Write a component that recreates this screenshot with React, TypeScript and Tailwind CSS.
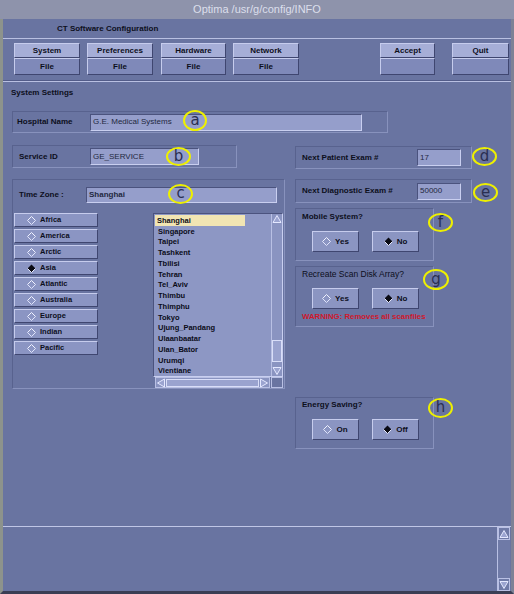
import type { ReactNode } from 'react';

const RAISED = 'border border-t-[#c6cced] border-l-[#c6cced] border-b-[#3f4670] border-r-[#3f4670]';
const SUNKEN = 'border border-t-[#4b537e] border-l-[#4b537e] border-b-[#c9cff0] border-r-[#c9cff0]';
const ETCHED = 'border border-t-[#58628e] border-l-[#58628e] border-b-[#8892bd] border-r-[#8892bd]';

const ZONES = [
  'Shanghai', 'Singapore', 'Taipei', 'Tashkent', 'Tbilisi', 'Tehran', 'Tel_Aviv', 'Thimbu',
  'Thimphu', 'Tokyo', 'Ujung_Pandang', 'Ulaanbaatar', 'Ulan_Bator', 'Urumqi', 'Vientiane',
];

const REGIONS = ['Africa', 'America', 'Arctic', 'Asia', 'Atlantic', 'Australia', 'Europe', 'Indian', 'Pacific'];

function Diamond({ on }: { on?: boolean }) {
  return (
    <svg width="9" height="9" viewBox="0 0 9 9" className="shrink-0">
      {on ? (
        <>
          <path d="M4.5 0.5 L8.5 4.5 L4.5 8.5 L0.5 4.5 Z" fill="#0a0b14" />
          <path d="M8.5 4.5 L4.5 8.5 L0.5 4.5" fill="none" stroke="#e8ebff" />
        </>
      ) : (
        <>
          <path d="M0.5 4.5 L4.5 0.5 L8.5 4.5" fill="none" stroke="#f0f2ff" />
          <path d="M8.5 4.5 L4.5 8.5 L0.5 4.5" fill="none" stroke="#dfe3fb" />
        </>
      )}
    </svg>
  );
}

function Marker({ letter, className }: { letter: string; className: string }) {
  return (
    <span
      className={`absolute flex items-center justify-center rounded-[50%] border-2 border-[#eef000] pb-[1px] font-['DejaVu_Sans',sans-serif] text-[15px] font-normal leading-none text-[#2a2f52] ${className}`}
    >
      {letter}
    </span>
  );
}

function ToolButton({ label, sub, className }: { label: string; sub?: string; className: string }) {
  return (
    <div className={`flex flex-col text-[8px] font-bold leading-none text-[#0d0f1c] ${className}`}>
      <div className={`flex h-[15px] items-center justify-center bg-[#a6aed7] ${RAISED}`}>{label}</div>
      <div className={`flex h-[17px] items-center justify-center bg-[#7f89b9] ${RAISED}`}>{sub}</div>
    </div>
  );
}

function Radio({ label, on }: { label: string; on?: boolean }) {
  return (
    <div
      className={`flex h-[21px] w-[47px] items-center justify-center gap-[4px] bg-[#8b95c2] text-[8px] font-bold text-[#0d0f1c] ${RAISED}`}
    >
      <Diamond on={on} />
      {label}
    </div>
  );
}

function Field({ children, className }: { children?: ReactNode; className: string }) {
  return (
    <div className={`flex items-center bg-[#959ecb] pl-[2px] text-[8px] text-[#23283e] ${SUNKEN} ${className}`}>
      {children}
    </div>
  );
}

function Arrow({ dir }: { dir: 'up' | 'down' | 'left' | 'right' }) {
  const d = {
    up: 'M5 1.5 L9 8.5 L1 8.5 Z',
    down: 'M1 1.5 L9 1.5 L5 8.5 Z',
    left: 'M1.5 5 L8.5 1 L8.5 9 Z',
    right: 'M8.5 5 L1.5 1 L1.5 9 Z',
  }[dir];
  return (
    <svg width="10" height="10" viewBox="0 0 10 10" className="shrink-0">
      <path d={d} fill="#9ba4d0" stroke="#e4e8ff" strokeWidth="1" />
    </svg>
  );
}

function ZoneList() {
  return (
    <div className="flex w-[130px] flex-col">
      <div className={`flex h-[164px] bg-[#8d97c4] ${SUNKEN}`}>
        <div className="flex flex-1 flex-col pl-[1px] pt-[1px] text-[7.5px] font-bold text-[#0b0c18]">
          {ZONES.map((z, i) => (
            <div
              key={z}
              className={i === 0 ? 'flex h-[10.75px] w-[90px] items-center bg-[#f1e5b3] pl-[2px]' : 'flex h-[10.75px] items-center pl-[3px]'}
            >
              {z}
            </div>
          ))}
        </div>
        <div className="flex w-[11px] flex-col border-l border-l-[#b9c0e4] bg-[#8a94c1]">
          <Arrow dir="up" />
          <div className="flex flex-1 flex-col justify-end pb-[4px]">
            <div className="h-[22px] border border-[#d9def8] bg-[#9aa3cf]" />
          </div>
          <Arrow dir="down" />
        </div>
      </div>
      <div className="flex h-[11px]">
        <div className="ml-[2px] flex w-[115px] items-center border border-[#b9c0e4] bg-[#8a94c1]">
          <Arrow dir="left" />
          <div className="h-[8px] flex-1 border border-[#d9def8] bg-[#9aa3cf]" />
          <Arrow dir="right" />
        </div>
        <div className="ml-[1px] flex-1 border border-[#b9c0e4]" />
      </div>
    </div>
  );
}

export default function App() {
  return (
    <div className="flex h-[594px] w-[514px] flex-col overflow-hidden bg-[#6974a1] font-['Liberation_Sans',Arial,sans-serif] text-[#0d0f1c]">
      <div className="flex h-[19px] items-center justify-center bg-[#8e93ab] text-[11px] text-[#dcdfec]">
        Optima /usr/g/config/INFO
      </div>

      <div className="flex flex-1 flex-col border-b-[3px] border-l-[3px] border-r-[3px] border-b-[#3a3e54] border-l-[#8d938c] border-r-[#7d8296]">
        <div className="flex h-[19px] items-center pl-[54px] text-[8px] font-bold">CT Software Configuration</div>
        <div className="h-px bg-[#b9c0e2]" />

        <div className="flex h-[41px] items-start pl-[11px] pt-[4px]">
          <ToolButton label="System" sub="File" className="w-[66px]" />
          <ToolButton label="Preferences" sub="File" className="ml-[7px] w-[66px]" />
          <ToolButton label="Hardware" sub="File" className="ml-[8px] w-[65px]" />
          <ToolButton label="Network" sub="File" className="ml-[7px] w-[66px]" />
          <ToolButton label="Accept" className="ml-[81px] w-[55px]" />
          <ToolButton label="Quit" className="ml-[17px] w-[57px]" />
        </div>
        <div className="h-px bg-[#535c89]" />
        <div className="h-px bg-[#b9c0e2]" />

        <main className="flex h-[444px] flex-col pl-[9px] pt-[6px]">
          <div className="-ml-[1px] h-[10px] text-[8px] font-bold leading-[10px]">System Settings</div>

          <div className={`relative mt-[13px] flex h-[22px] w-[376px] items-center ${ETCHED}`}>
            <span className="w-[77px] pl-[4px] text-[8px] font-bold">Hospital Name</span>
            <Field className="h-[17px] w-[272px]">G.E. Medical Systems</Field>
            <Marker letter="a" className="-top-[2px] left-[170px] h-[21px] w-[24px]" />
          </div>

          <div className="mt-[12px] flex gap-[10px]">
            <div className="flex w-[273px] flex-col gap-[11px]">
              <div className={`relative flex h-[23px] w-[225px] items-center ${ETCHED}`}>
                <span className="w-[77px] pl-[6px] text-[8px] font-bold">Service ID</span>
                <Field className="h-[17px] w-[109px]">GE_SERVICE</Field>
                <Marker letter="b" className="left-[153px] top-[1px] h-[19px] w-[25px]" />
              </div>

              <div className={`relative flex h-[210px] flex-col ${ETCHED}`}>
                <div className="mt-[7px] flex h-[16px] items-center">
                  <span className="w-[73px] pl-[6px] text-[8px] font-bold">Time Zone :</span>
                  <Field className="h-[16px] w-[191px] font-bold">Shanghai</Field>
                </div>
                <div className="mt-[10px] flex pl-[1px]">
                  <div className="flex w-[84px] flex-col gap-[2px]">
                    {REGIONS.map((r) => (
                      <div
                        key={r}
                        className={`flex h-[14px] items-center gap-[4px] bg-[#8b95c3] pl-[12px] text-[7.5px] font-bold ${RAISED}`}
                      >
                        <Diamond on={r === 'Asia'} />
                        {r}
                      </div>
                    ))}
                  </div>
                  <div className="ml-[55px]">
                    <ZoneList />
                  </div>
                </div>
                <Marker letter="c" className="left-[155px] top-[4px] h-[20px] w-[25px]" />
              </div>
            </div>

            <div className="mt-[1px] flex w-[177px] flex-col">
              <div className={`relative flex h-[23px] items-center ${ETCHED}`}>
                <span className="w-[121px] pl-[6px] text-[8px] font-bold">Next Patient Exam #</span>
                <Field className="h-[17px] w-[44px]">17</Field>
                <Marker letter="d" className="left-[176px] top-0 h-[19px] w-[25px]" />
              </div>

              <div className={`relative mt-[10px] flex h-[24px] items-center ${ETCHED}`}>
                <span className="w-[121px] pl-[6px] text-[8px] font-bold">Next Diagnostic Exam #</span>
                <Field className="h-[17px] w-[44px]">50000</Field>
                <Marker letter="e" className="left-[177px] top-[3px] h-[19px] w-[25px]" />
              </div>

              <div className={`relative mt-[5px] flex h-[53px] w-[139px] flex-col ${ETCHED}`}>
                <div className="mt-[3px] h-[10px] pl-[6px] text-[8px] font-bold leading-[10px]">Mobile System?</div>
                <div className="mt-[9px] flex gap-[13px] pl-[16px]">
                  <Radio label="Yes" />
                  <Radio label="No" on />
                </div>
                <Marker letter="f" className="left-[132px] top-[4px] h-[19px] w-[25px]" />
              </div>

              <div className={`relative mt-[5px] flex h-[61px] w-[139px] flex-col ${ETCHED}`}>
                <div className="mt-[2px] h-[10px] pl-[6px] text-[8.5px] leading-[10px]">Recreate Scan Disk Array?</div>
                <div className="mt-[9px] flex gap-[13px] pl-[16px]">
                  <Radio label="Yes" />
                  <Radio label="No" on />
                </div>
                <div className="mt-[3px] h-[10px] whitespace-nowrap pl-[6px] text-[7.8px] font-bold leading-[10px] text-[#d0182c]">
                  WARNING: Removes all scanfiles
                </div>
                <Marker letter="g" className="left-[127px] top-[2px] h-[21px] w-[26px]" />
              </div>

              <div className={`relative mt-[70px] flex h-[52px] w-[139px] flex-col ${ETCHED}`}>
                <div className="mt-[2px] h-[10px] pl-[6px] text-[8px] font-bold leading-[10px]">Energy Saving?</div>
                <div className="mt-[9px] flex gap-[13px] pl-[16px]">
                  <Radio label="On" />
                  <Radio label="Off" on />
                </div>
                <Marker letter="h" className="left-[132px] top-0 h-[20px] w-[25px]" />
              </div>
            </div>
          </div>
        </main>

        <div className="h-px bg-[#c0c6e6]" />
        <div className="flex flex-1 justify-end pr-[1px]">
          <div className="flex w-[13px] flex-col border-l border-l-[#b9c0e4] bg-[#6f7aa7]">
            <div className="flex h-[13px] items-center justify-center border border-[#b9c0e4]">
              <Arrow dir="up" />
            </div>
            <div className="flex-1" />
            <div className="flex h-[13px] items-center justify-center border border-[#b9c0e4]">
              <Arrow dir="down" />
            </div>
          </div>
        </div>
      </div>
    </div>
  );
}
